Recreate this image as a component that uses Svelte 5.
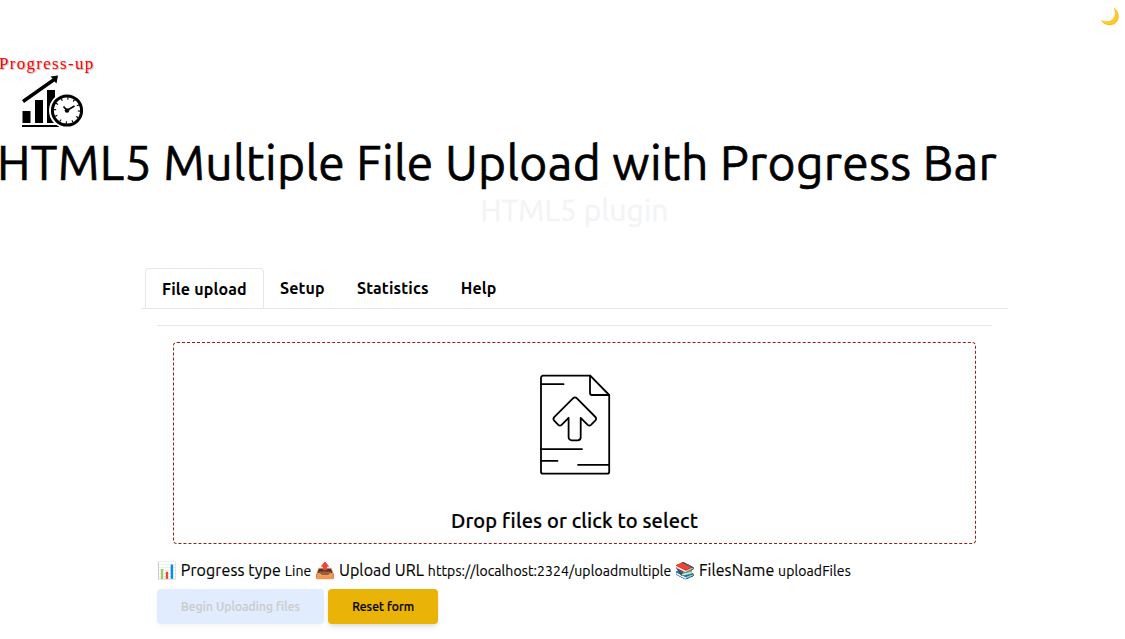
<script>
  const tabs = ['File upload', 'Setup', 'Statistics', 'Help'];
  const info = [
    { icon: '📊', name: 'Progress type', value: 'Line' },
    { icon: '📤', name: 'Upload URL', value: 'https://localhost:2324/uploadmultiple' },
    { icon: '📚', name: 'FilesName', value: 'uploadFiles' }
  ];
</script>

<div class="page">
  <button class="theme">🌙</button>
  <header>
    <div class="logo">
      <span class="brand">Progress-up</span>
      <svg width="64" height="54" viewBox="0 0 64 54">
        <g fill="#000">
          <path d="M1.5 36h8v12h-8zM14 25h8v23h-8zM26 15h8v33h-8zM1 50h37v2H1z" />
          <path d="m37 .5-7.5 1 2 2L1 25l2 3L33.5 6.5l2 2Z" />
        </g>
        <circle cx="46" cy="35.5" r="18" fill="#fff" />
        <circle cx="46" cy="35.5" r="14.6" fill="#fff" stroke="#000" stroke-width="3" />
        <circle cx="46" cy="35.5" r="12" fill="none" stroke="#000" stroke-width="2.4" stroke-dasharray="1.1 5.183" />
        <path d="m42.5 31.5 3.5 4 7.5-4.5" fill="none" stroke="#000" stroke-width="1.7" />
        <circle cx="46" cy="35.5" r="2.3" />
      </svg>
    </div>
    <h1>HTML5 Multiple File Upload with Progress Bar</h1>
    <h2>HTML5 plugin</h2>
  </header>
  <main>
    <nav>
      {#each tabs as tab, i}
        <button class="tab" class:active={i === 0}>{tab}</button>
      {/each}
    </nav>
    <section class="panel">
      <div class="rule"></div>
      <div class="drop">
        <svg width="72" height="102" viewBox="0 0 72 102" fill="none" stroke="#000" stroke-width="1.8" stroke-linecap="round" stroke-linejoin="round">
          <path d="M51.2 1.7H4A2 2 0 0 0 2 3.7v94A2 2 0 0 0 4 99.7h64.2a2 2 0 0 0 2-2V21Z" />
          <path d="M51 1.7V19a2 2 0 0 0 2 2H70M2 10.2h22.5M2 75.2h41M2 86.8h16.5M39 90.8H70" />
          <path d="m34.2 24.2-19 19a2.6 2.6 0 0 0 0 3.5l4.1 4.1a2.4 2.4 0 0 0 3.3 0l7-7v19.5a3 3 0 0 0 3 3h6.1a3 3 0 0 0 3-3V43.8l7 7a2.4 2.4 0 0 0 3.3 0l4.4-4.4a2.4 2.4 0 0 0 0-3.4L37.7 24.2a2.5 2.5 0 0 0-3.5 0Z" />
        </svg>
        <p>Drop files or click to select</p>
      </div>
      <div class="info">
        {#each info as item}
          {item.icon} {item.name} <small>{item.value}</small>{' '}
        {/each}
      </div>
      <div class="actions">
        <button class="begin" disabled>Begin Uploading files</button>
        <button class="reset">Reset form</button>
      </div>
    </section>
  </main>
</div>

<style>
  :global(body) { margin: 0; background: #fff; overflow: hidden; }
  * { box-sizing: border-box; }
  .page { position: relative; height: 639px; padding-top: 52px; overflow: hidden; font-family: Ubuntu, "Noto Sans", "Noto Color Emoji", sans-serif; color: #000; }
  button { font-family: inherit; border: 0; padding: 0; margin: 0; background: none; color: #000; }
  svg { display: block; flex: none; }
  .theme { position: absolute; right: 5px; top: 4px; font-size: 16px; line-height: 24px; }
  .logo { height: 86px; }
  .brand { display: block; height: 23px; margin-left: -1px; font: 17px/23px "Liberation Serif", serif; letter-spacing: 1.3px; color: #f00; text-shadow: 1px 1px 1px #bbb; }
  .logo svg { margin-left: 21px; }
  h1 { margin: 0 0 0 -3px; font-size: 48px; line-height: 48px; height: 48px; font-weight: 400; letter-spacing: .31px; -webkit-text-stroke: .65px #000; white-space: nowrap; }
  h2 { margin: 6px 0 0; width: 1149px; text-align: center; font-size: 30px; line-height: 36px; height: 36px; font-weight: 400; letter-spacing: .1px; -webkit-text-stroke: .4px #f3f4f6; color: #f3f4f6; }
  main { width: 867px; margin: 40px 0 0 141px; }
  nav { display: flex; height: 41px; padding-left: 4px; border-bottom: 1px solid #e5e7eb; }
  .tab { height: 40px; padding: 0 16px; font-size: 16px; font-weight: 700; line-height: 24px; letter-spacing: .17px; }
  .tab.active { height: 40px; border: 1px solid #e5e7eb; border-bottom: 0; border-radius: 4px 4px 0 0; padding-top: 1px; }
  .panel { padding: 16px; }
  .rule { height: 1px; background: #e5e7eb; }
  .drop { display: flex; flex-direction: column; align-items: center; height: 202px; margin: 16px 16px 0; padding-top: 31px; border: 1px dashed #991b1b; border-radius: 4px; }
  .drop p { margin: 31px 0 0; font-size: 20px; line-height: 28px; font-weight: 500; letter-spacing: .13px; -webkit-text-stroke: .2px #000; }
  .info { height: 24px; margin-top: 14px; font-size: 16px; line-height: 24px; font-weight: 400; letter-spacing: .1px; -webkit-text-stroke: .15px #000; white-space: nowrap; }
  small { font-size: 14px; line-height: 20px; }
  .actions { display: flex; gap: 4px; margin-top: 7px; }
  .actions button { padding: 0 24px; height: 35px; border-radius: 4px; font-size: 12px; font-weight: 500; line-height: 18px; letter-spacing: .1px; -webkit-text-stroke: .2px currentColor; }
  .actions .begin { background: #e1edff; color: #ccc; box-shadow: 0 3px 6px -1px #0000000d; }
  .actions .reset { background: #eab308; color: #000; box-shadow: 0 4px 6px -1px #0000001a, 0 2px 4px -1px #0000000f; }
</style>
